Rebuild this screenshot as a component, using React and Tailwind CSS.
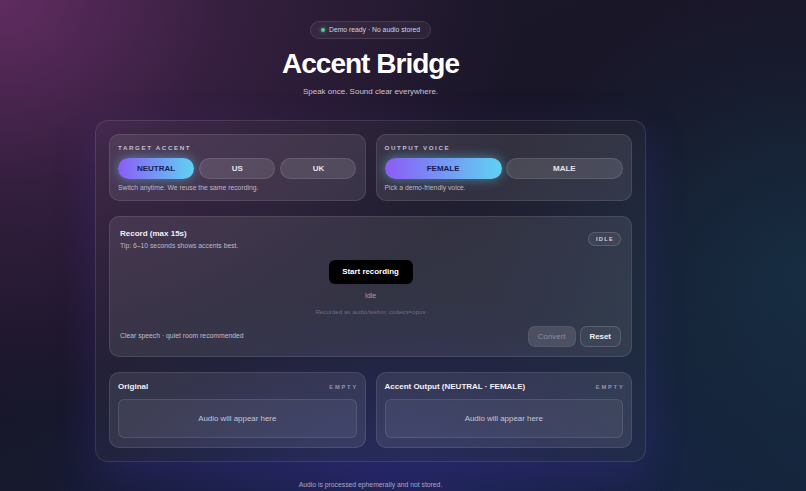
import React from "react";

function Seg({ items, active, cols }) {
  return (
    <div className={cols === 3 ? "grid grid-cols-3 gap-[5px] mt-[6px]" : "grid grid-cols-2 gap-[4px] mt-[6px]"}>
      {items.map((it) =>
        it === active ? (
          <div
            key={it}
            className="h-[21px] rounded-full flex items-center justify-center text-[8px] font-bold text-[#191c58] bg-[linear-gradient(90deg,#8b5cf6,#5ed2f2)] shadow-[0_0_12px_rgba(94,200,242,0.55)]"
          >
            {it}
          </div>
        ) : (
          <div
            key={it}
            className="h-[21px] rounded-full flex items-center justify-center text-[8px] font-bold text-[#e6e2ec] bg-white/[0.11] border border-white/10"
          >
            {it}
          </div>
        )
      )}
    </div>
  );
}

function Card({ children, className = "" }) {
  return (
    <div className={"rounded-[10px] border border-white/10 bg-white/[0.085] " + className}>{children}</div>
  );
}

function Label({ children }) {
  return (
    <div className="text-[6.2px] leading-[8px] font-bold tracking-[0.26em] text-[#c4bfcf]">{children}</div>
  );
}

function AudioCard({ title }) {
  return (
    <Card className="px-[8px] pt-[9px] pb-[9px]">
      <div className="flex items-center justify-between h-[10px]">
        <div className="text-[8px] leading-[10px] font-bold text-[#f2f0f6]">{title}</div>
        <div className="text-[5.7px] font-bold tracking-[0.32em] text-[#9a96a8] mr-[-1.5px]">EMPTY</div>
      </div>
      <div className="mt-[7px] h-[39px] rounded-[6px] border border-white/10 bg-white/[0.05] flex items-center justify-center text-[7.9px] text-[#c9c5d4]">
        Audio will appear here
      </div>
    </Card>
  );
}

export default function App() {
  return (
    <div className="w-full min-h-screen font-['Liberation_Sans',Arial,sans-serif] bg-[#171628] bg-[image:radial-gradient(ellipse_65%_85%_at_0%_0%,rgba(100,45,100,0.95)_0%,rgba(90,42,95,0.4)_45%,transparent_100%),radial-gradient(ellipse_45%_40%_at_48%_100%,rgba(45,45,140,0.45),transparent_100%),radial-gradient(ellipse_40%_60%_at_100%_55%,rgba(25,70,90,0.4),transparent_100%),linear-gradient(160deg,#1c1828_0%,#171527_45%,#14223a_100%)]">
      <div className="w-[741px] flex flex-col items-center pt-[21px] pb-[2px]">
        <div className="h-[18px] flex items-center gap-[4px] px-[10px] rounded-full border border-white/10 bg-white/[0.05]">
          <span className="w-[4px] h-[4px] rounded-full bg-[#4ad389] shadow-[0_0_4px_rgba(74,211,137,0.8)]" />
          <span className="text-[6.8px] text-[#d6d2de]">Demo ready · No audio stored</span>
        </div>
        <h1 className="mt-[11px] text-[28px] leading-[28px] font-bold tracking-[-0.035em] text-white">Accent Bridge</h1>
        <p className="mt-[8px] text-[8px] leading-[12px] text-[#cbc7d6]">Speak once. Sound clear everywhere.</p>

        <div className="mt-[22px] w-[551px] rounded-[13px] border border-white/10 bg-white/[0.04] p-[13px] flex flex-col gap-[15px] shadow-[0_12px_40px_rgba(80,60,200,0.22)]">
          <div className="grid grid-cols-2 gap-[10px]">
            <Card className="px-[8px] pt-[9px] pb-[8px]">
              <Label>TARGET ACCENT</Label>
              <Seg items={["NEUTRAL", "US", "UK"]} active="NEUTRAL" cols={3} />
              <div className="mt-[4px] text-[6.8px] leading-[9px] text-[#bdb8c8]">Switch anytime. We reuse the same recording.</div>
            </Card>
            <Card className="px-[8px] pt-[9px] pb-[8px]">
              <Label>OUTPUT VOICE</Label>
              <Seg items={["FEMALE", "MALE"]} active="FEMALE" cols={2} />
              <div className="mt-[4px] text-[6.8px] leading-[9px] text-[#bdb8c8]">Pick a demo-friendly voice.</div>
            </Card>
          </div>

          <Card className="px-[10px] pt-[12px] pb-[9px] flex flex-col">
            <div className="flex justify-between items-start">
              <div>
                <div className="text-[8px] leading-[10px] font-bold text-[#f2f0f6]">Record (max 15s)</div>
                <div className="mt-[2px] text-[6.8px] leading-[9px] text-[#bdb8c8]">Tip: 6–10 seconds shows accents best.</div>
              </div>
              <div className="mt-[3px] h-[14px] w-[33px] rounded-full border border-white/15 bg-white/[0.06] flex items-center justify-center text-[5.7px] font-bold tracking-[0.22em] pl-[1px] text-[#d4d0dc]">
                IDLE
              </div>
            </div>
            <div className="self-center mt-[10px] h-[24px] w-[84px] rounded-[6px] bg-black flex items-center justify-center text-[7.9px] font-bold text-white">
              Start recording
            </div>
            <div className="self-center mt-[7px] text-[6.8px] leading-[9px] text-[#a6a2b4]">Idle</div>
            <div className="self-center mt-[8px] text-[6.2px] leading-[7px] text-[#6f6b86]">Recorded as audio/webm; codecs=opus</div>
            <div className="mt-[11px] flex items-center justify-between">
              <div className="text-[6.8px] text-[#c2bdcc]">Clear speech · quiet room recommended</div>
              <div className="flex gap-[4px]">
                <div className="h-[21px] px-[9px] rounded-[7px] border border-white/5 bg-white/[0.12] flex items-center text-[7.9px] text-[#8e8a9c]">
                  Convert
                </div>
                <div className="h-[21px] px-[9px] rounded-[7px] border border-white/15 bg-white/[0.05] flex items-center text-[7.9px] font-bold text-[#f2f0f6]">
                  Reset
                </div>
              </div>
            </div>
          </Card>

          <div className="grid grid-cols-2 gap-[10px]">
            <AudioCard title="Original" />
            <AudioCard title="Accent Output (NEUTRAL · FEMALE)" />
          </div>
        </div>

        <p className="mt-[18px] text-[6.8px] leading-[9px] text-[#a9a6c2]">Audio is processed ephemerally and not stored.</p>
      </div>
    </div>
  );
}
